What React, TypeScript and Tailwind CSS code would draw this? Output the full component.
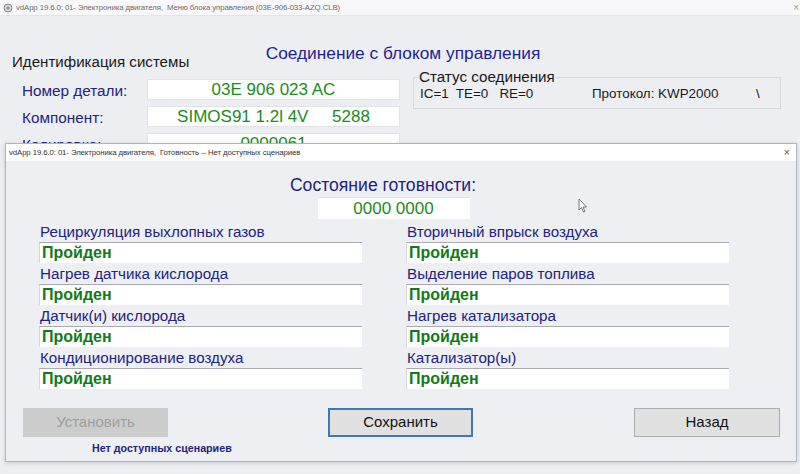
import { Fragment } from 'react';
import type { ReactNode } from 'react';

const NAVY = 'text-[#23237e]';

const MONITORS: [string, string][] = [
  ['Рециркуляция выхлопных газов', 'Вторичный впрыск воздуха'],
  ['Нагрев датчика кислорода', 'Выделение паров топлива'],
  ['Датчик(и) кислорода', 'Нагрев катализатора'],
  ['Кондиционирование воздуха', 'Катализатор(ы)'],
];

function IdRow({ label, children }: { label: string; children: ReactNode }) {
  return (
    <div className="flex items-center h-[21px]">
      <span className={`w-[125px] ml-[10px] text-[15.3px] leading-[18px] mt-[3px] ${NAVY}`}>{label}</span>
      <div className="w-[253px] h-[21px] bg-white border border-[#e2e3e6] flex items-center justify-center text-[17px] leading-[20px] text-[#1d8a22] whitespace-pre">
        {children}
      </div>
    </div>
  );
}

function Monitor({ label }: { label: string }) {
  return (
    <div className="flex flex-col">
      <div className={`h-[20px] pl-[1px] text-[15.2px] leading-[20px] ${NAVY}`}>{label}</div>
      <div className="h-[21px] bg-white border-t border-t-[#a9abb0] border-l border-l-[#d6d8dc] flex items-center pl-[2px] text-[16px] font-bold text-[#127a17]">
        Пройден
      </div>
    </div>
  );
}

function Cursor() {
  return (
    <svg width="10" height="15" viewBox="0 0 10 15" className="absolute left-[572px] top-[37px]">
      <path d="M1 1 L1 12 L3.5 9.5 L5.5 14 L7 13.3 L5 9 L8.5 9 Z" fill="#ffffff" stroke="#6a6a6a" strokeWidth="0.9" />
    </svg>
  );
}

export default function App() {
  return (
    <div className="relative w-[800px] h-[474px] overflow-hidden bg-[#edeef2] font-['Liberation_Sans',Arial,sans-serif]">
      {/* back window title */}
      <div className="h-[16px] bg-[#f8f8fa] flex items-center border-b border-[#e4e5e9]">
        <svg width="10" height="10" viewBox="0 0 10 10" className="ml-[3px]">
          <circle cx="5" cy="5" r="4" fill="#d9d9d9" stroke="#8a8a8a" strokeWidth="1" />
          <circle cx="5" cy="5" r="1.6" fill="#8a8a8a" />
        </svg>
        <span className="ml-[3px] text-[7.8px] text-[#6b6b6b] tracking-[-0.1px]">
          vdApp 19.6.0: 01- Электроника двигателя,&nbsp; Меню блока управления (03E-906-033-AZQ.CLB)
        </span>
        <span className="ml-auto mr-[1px] text-[10px] text-[#9a9a9a]">×</span>
      </div>

      <div className="pt-[26px] pl-[6px] text-center text-[17.3px] leading-[22px] text-[#1e1e94]">
        Соединение с блоком управления
      </div>

      <div className="flex items-start -mt-[11px]">
        <div className="flex flex-col gap-[6px] pl-[12px]">
          <div className="h-[18px] text-[15.1px] leading-[18px] text-[#1a1a1a] mb-[2px]">Идентификация системы</div>
          <IdRow label="Номер детали:">03E 906 023 AC</IdRow>
          <IdRow label="Компонент:">{'SIMOS91 1.2l 4V     5288'}</IdRow>
          <IdRow label="Кодировка:">0000061</IdRow>
        </div>
        <fieldset className="ml-[13px] mt-[15px] w-[368px] border border-[#d6d8dc] px-[4px] pb-[6px]">
          <legend className="px-[1px] text-[15.2px] leading-[18px] text-[#1a1a1a]">Статус соединения</legend>
          <div className="flex items-center text-[13.4px] leading-[16px] text-[#1a1a1a] whitespace-pre">
            <span className="w-[174px] pl-[2px]">{'IC=1  TE=0   RE=0'}</span>
            <span className="w-[164px]">Протокол: KWP2000</span>
            <span>\</span>
          </div>
        </fieldset>
      </div>

      {/* readiness dialog */}
      <div className="absolute left-[5px] top-[143px] w-[792px] h-[319px] bg-[#eeeff3] border border-[#a9b6c6] shadow-[0_1px_4px_rgba(0,0,0,0.15)] flex flex-col">
        <div className="h-[17px] bg-white flex items-center shrink-0">
          <span className="ml-[3px] text-[7.8px] text-[#333] tracking-[-0.1px]">
            vdApp 19.6.0: 01- Электроника двигателя,&nbsp; Готовность -- Нет доступных сценариев
          </span>
          <span className="ml-auto mr-[6px] text-[11px] text-[#555]">×</span>
        </div>

        <div className="relative flex flex-col">
          <Cursor />
          <div className={`mt-[15px] h-[18px] text-center text-[17.6px] leading-[18px] pr-[36px] ${NAVY}`}>
            Состояние готовности:
          </div>
          <div className="self-center mr-[15px] mt-[3px] w-[152px] h-[22px] bg-white border-t border-[#e0e1e4] flex items-center justify-center text-[17px] text-[#1d8a22]">
            0000 0000
          </div>

          <div className="mt-[3px] ml-[33px] grid grid-cols-[323px_323px] gap-x-[44px] gap-y-[1px]">
            {MONITORS.map(([l, r]) => (
              <Fragment key={l}>
                <Monitor label={l} />
                <Monitor label={r} />
              </Fragment>
            ))}
          </div>

          <div className="mt-[19px] ml-[17px] flex items-start">
            <div className="w-[145px] h-[29px] bg-[#cccccd] flex items-center justify-center text-[15px] text-[#9c9c9c]">
              Установить
            </div>
            <div className="ml-[160px] w-[145px] h-[29px] bg-[#e1e1e1] border-2 border-[#3d7ab5] flex items-center justify-center text-[15px] text-[#111]">
              Сохранить
            </div>
            <div className="ml-[161px] w-[146px] h-[29px] bg-[#e1e1e1] border border-[#adadad] flex items-center justify-center text-[15px] text-[#111]">
              Назад
            </div>
          </div>
          <div className="ml-[86px] mt-[4px] text-[10.7px] font-bold text-[#23237e] leading-[14px]">
            Нет доступных сценариев
          </div>
        </div>
      </div>
    </div>
  );
}
